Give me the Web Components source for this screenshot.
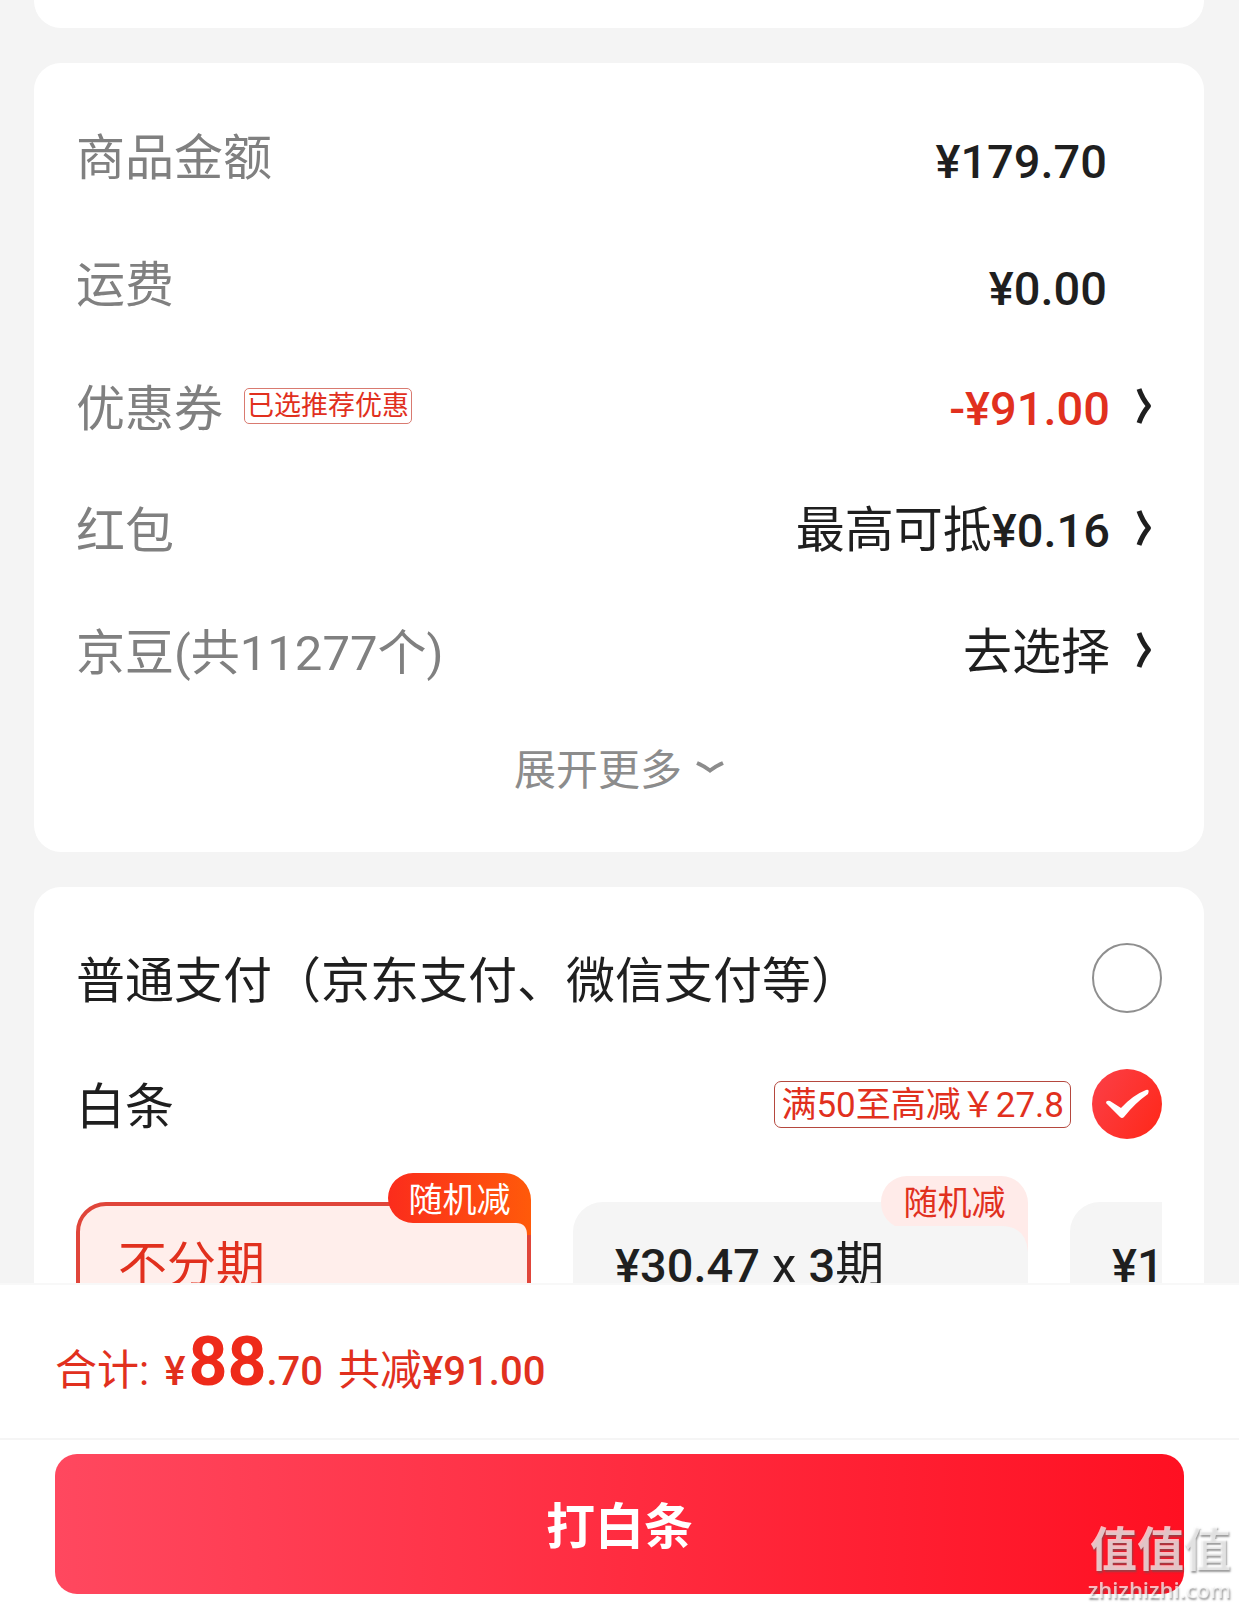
<!DOCTYPE html>
<html lang="zh-CN">
<head>
<meta charset="UTF-8">
<meta name="viewport" content="width=device-width, initial-scale=1">
<title>打白条</title>
<style>
  body {
    margin: 0;
    font-family: Roboto, "Noto Sans CJK SC", sans-serif;
    font-size: 49px;
    line-height: 60px;
    color: #1f1f1f;
    --red: #e1301e;
    --gray: #808080;
    --page: #f4f4f4;
  }
</style>
</head>
<body>
<checkout-page>
  <info-card class="previous"></info-card>

  <info-card class="amounts">
    <amount-row>商品金额<price-text slot="value">¥179.70</price-text></amount-row>
    <amount-row>运费<price-text slot="value">¥0.00</price-text></amount-row>
    <amount-row link>优惠券<promo-tag slot="tag">已选推荐优惠</promo-tag><price-text slot="value" class="minus">-¥91.00</price-text></amount-row>
    <amount-row link>红包<span slot="value">最高可抵<price-text>¥0.16</price-text></span></amount-row>
    <amount-row link>京豆(共11277个)<span slot="value">去选择</span></amount-row>
    <expand-more>展开更多</expand-more>
  </info-card>

  <info-card>
    <pay-methods>
      <span slot="normal">普通支付（京东支付、微信支付等）</span>
      <span slot="credit">白条</span>
      <promo-tag slot="credit-tag" large>满50至高减￥27.8</promo-tag>
      <plan-option slot="plans" selected badge="随机减">不分期</plan-option>
      <plan-option slot="plans" badge="随机减"><price-text>¥30.47</price-text> x <price-text>3</price-text>期</plan-option>
      <plan-option slot="plans"><price-text>¥1</price-text></plan-option>
    </pay-methods>
  </info-card>

  <submit-bar slot="footer" total="88" cents=".70" saved="¥91.00">打白条</submit-bar>
  <site-mark slot="footer"></site-mark>
</checkout-page>

<script>
class CheckoutPage extends HTMLElement {
  constructor() {
    super();
    this.attachShadow({ mode: 'open' });
    this.shadowRoot.innerHTML = `
      <style>
        :host {
          display: flex;
          flex-direction: column;
          height: 100vh;
          background: var(--page);
        }
        main {
          flex: 1;
          min-height: 0;
          display: flex;
          flex-direction: column;
          gap: 35px;
          padding: 0 35px 0 34px;
          overflow-y: auto;
          scrollbar-width: none;
        }
      </style>
      <main><slot></slot></main>
      <slot name="footer"></slot>
    `;
  }
}

class InfoCard extends HTMLElement {
  constructor() {
    super();
    this.attachShadow({ mode: 'open' });
    this.shadowRoot.innerHTML = `
      <style>
        :host {
          display: block;
          flex: none;
          padding: 28px 42px 25px;
          border-radius: 27px;
          background: #fff;
        }
        :host(.previous) {
          padding: 14px 0;
          border-radius: 0 0 27px 27px;
        }
      </style>
      <slot></slot>
    `;
  }
}

class PriceText extends HTMLElement {
  constructor() {
    super();
    this.attachShadow({ mode: 'open' });
    // no blanks around the slot: the price sits inline next to other text
    this.shadowRoot.innerHTML = `<style>
        :host {
          font-size: 47px;
          font-weight: 500;
        }
        :host(.minus) {
          color: var(--red);
        }
      </style><slot></slot>`;
  }
}

class PromoTag extends HTMLElement {
  constructor() {
    super();
    this.attachShadow({ mode: 'open' });
    this.shadowRoot.innerHTML = `
      <style>
        :host {
          display: inline-block;
          flex: none;
          padding: 0 2px;
          border: 1px solid #d97a70;
          border-radius: 5px;
          color: var(--red);
          font-size: 27px;
          line-height: 34px;
          white-space: nowrap;
        }
        :host([large]) {
          padding: 3px 6px 0;
          border-color: #b5483e;
          border-radius: 7px;
          font-size: 35px;
          line-height: 42px;
        }
      </style>
      <slot></slot>
    `;
  }
}

class AmountRow extends HTMLElement {
  constructor() {
    super();
    this.attachShadow({ mode: 'open' });
  }

  connectedCallback() {
    const link = this.hasAttribute('link');
    const value = link
      ? `<button><span class="text"><slot name="value"></slot></span>
          <svg width="16" height="38" viewBox="0 0 16 38" fill="none" stroke="#1f1f1f" stroke-width="5">
            <path d="M3 2 Q6 11 12.500 19 Q6 27 3 36" stroke-linejoin="round"/>
          </svg></button>`
      : '<span class="value"><slot name="value"></slot></span>';

    this.shadowRoot.innerHTML = `
      <style>
        :host {
          display: flex;
          align-items: center;
          height: 127px;
          white-space: nowrap;
        }
        :host([link]) {
          height: 122px;
        }
        .label {
          padding-top: 8px;
          color: var(--gray);
        }
        .tag {
          margin-left: 21px;
          display: flex;
          flex: 1;
        }
        .value {
          padding: 14px 55px 0 0;
        }
        .text {
          padding-top: 5px;
        }
        button {
          display: flex;
          align-items: center;
          gap: 26px;
          padding: 0 10px 0 0;
          border: 0;
          background: none;
          color: inherit;
          font: inherit;
          cursor: pointer;
        }
      </style>
      <span class="label"><slot></slot></span>
      <span class="tag"><slot name="tag"></slot></span>
      ${value}
    `;
  }
}

class ExpandMore extends HTMLElement {
  constructor() {
    super();
    this.attachShadow({ mode: 'open' });
    this.shadowRoot.innerHTML = `
      <style>
        :host {
          display: flex;
          justify-content: center;
          height: 116px;
        }
        button {
          display: flex;
          align-items: center;
          gap: 14px;
          padding: 0;
          border: 0;
          background: none;
          color: #8c8c8c;
          font: inherit;
          font-size: 42px;
          cursor: pointer;
        }
        span {
          padding-top: 4px;
        }
      </style>
      <button><span><slot></slot></span>
        <svg width="28" height="18" viewBox="0 0 28 18" fill="none" stroke="#8c8c8c" stroke-width="4">
          <path d="M1 3 Q8 6 14 10.500 Q20 6 27 3"/>
        </svg>
      </button>
    `;
  }
}

class PayMethods extends HTMLElement {
  constructor() {
    super();
    this.attachShadow({ mode: 'open' });
    this.shadowRoot.innerHTML = `
      <style>
        :host {
          display: block;
        }
        .method {
          display: flex;
          align-items: center;
          gap: 21px;
          height: 126px;
          white-space: nowrap;
          cursor: pointer;
        }
        .name {
          flex: 1;
          padding-top: 8px;
        }
        .radio {
          display: grid;
        }
        input {
          grid-area: 1 / 1;
          appearance: none;
          width: 70px;
          height: 70px;
          margin: 0;
          border: 2px solid #8f8f8f;
          border-radius: 50%;
        }
        input:checked {
          border: 0;
          background: linear-gradient(120deg, #fb4048, #ff2718);
        }
        svg {
          grid-area: 1 / 1;
          pointer-events: none;
        }
        input:not(:checked) + svg {
          visibility: hidden;
        }
        .plans {
          display: flex;
          gap: 42px;
          padding-top: 35px;
          overflow-x: auto;
          scrollbar-width: none;
        }
      </style>
      <label class="method">
        <span class="name"><slot name="normal"></slot></span>
        ${this.radio('normal')}
      </label>
      <label class="method">
        <span class="name"><slot name="credit"></slot></span>
        <slot name="credit-tag"></slot>
        ${this.radio('credit', 'checked')}
      </label>
      <div class="plans"><slot name="plans"></slot></div>
    `;
  }

  radio(value, checked = '') {
    return `
      <span class="radio">
        <input type="radio" name="pay" value="${value}" ${checked}>
        <svg width="70" height="70" viewBox="0 0 70 70">
          <path d="M14 34 Q14 31 18 32 L29 39 Q41 26 54 21 Q58 20 56 25 Q43 34 32 48 Q30 50 28 48 Z" fill="#fff"/>
        </svg>
      </span>
    `;
  }
}

class PlanOption extends HTMLElement {
  constructor() {
    super();
    this.attachShadow({ mode: 'open' });
  }

  connectedCallback() {
    const badge = this.getAttribute('badge');
    this.shadowRoot.innerHTML = `
      <style>
        :host {
          position: relative;
          display: block;
          flex: none;
          --fill: #f5f5f5;
          --line: #f5f5f5;
        }
        :host([selected]) {
          color: var(--red);
          --fill: #ffeeeb;
          --line: #e0453a;
        }
        button {
          width: 455px;
          padding: 30px 38px 54px;
          display: block;
          border: 4px solid var(--line);
          border-radius: 30px;
          background: var(--fill);
          color: inherit;
          font: inherit;
          text-align: left;
          white-space: nowrap;
          cursor: pointer;
        }
        :host([badge]) button {
          border-top-right-radius: 0;
        }
        .badge {
          position: absolute;
          top: -26px;
          right: 0;
          display: grid;
          color: var(--red);
          font-size: 34px;
          line-height: 50px;
          text-align: center;
          pointer-events: none;
        }
        :host([selected]) .badge {
          top: -29px;
          color: #fff;
        }
        .badge span, svg {
          grid-area: 1 / 1;
        }
        .badge span {
          padding-top: 2px;
        }
      </style>
      <button><slot></slot></button>
      ${badge ? `<div class="badge">${this.shape()}<span>${badge}</span></div>` : ''}
    `;
  }

  // tab shape whose tail runs down into the option's right edge
  shape() {
    if (this.hasAttribute('selected')) {
      return `<svg width="143" height="64" viewBox="0 0 143 64">
        <defs><linearGradient id="g"><stop offset="0" stop-color="#fb2c1c"/><stop offset="1" stop-color="#ff5a0a"/></linearGradient></defs>
        <path fill="url(#g)" d="M25 0H116A27 27 0 0 1 143 27V62H139Q139 50 128 50H25A25 25 0 0 1 25 0Z"/>
      </svg>`;
    }
    return `<svg width="147" height="76" viewBox="0 0 147 76">
      <path fill="#ffebe9" d="M26 0H120A27 27 0 0 1 147 27V76Q145 50 120 50H14Q0 42 0 26A26 26 0 0 1 26 0Z"/>
    </svg>`;
  }
}

class SubmitBar extends HTMLElement {
  constructor() {
    super();
    this.attachShadow({ mode: 'open' });
  }

  connectedCallback() {
    this.shadowRoot.innerHTML = `
      <style>
        :host {
          display: block;
          flex: none;
          border-top: 2px solid #f8f8f8;
          background: #fff;
        }
        .total {
          display: flex;
          align-items: baseline;
          height: 153px;
          padding: 0 55px;
          border-bottom: 2px solid #f5f5f5;
          color: var(--red);
          font-size: 42px;
          line-height: 172px;
          white-space: nowrap;
        }
        .price {
          margin: 0 15px;
          font-size: 40px;
          font-weight: 500;
        }
        .price b {
          margin-left: 3px;
          font-size: 68px;
          font-weight: 700;
          line-height: 80px;
          color: #ee2a1a;
        }
        .saved {
          font-size: 40px;
          font-weight: 500;
        }
        .action {
          padding: 14px 55px 13px;
        }
        button {
          display: block;
          width: 100%;
          height: 140px;
          padding: 8px 0 0;
          border: 0;
          border-radius: 22px;
          background: linear-gradient(90deg, #ff485f, #ff2c40 50%, #ff1022);
          color: #fff;
          font: inherit;
          font-weight: 700;
          cursor: pointer;
        }
      </style>
      <div class="total">
        <span>合计:</span>
        <span class="price">¥<b>${this.getAttribute('total')}</b>${this.getAttribute('cents')}</span>
        <span>共减</span>
        <span class="saved">${this.getAttribute('saved')}</span>
      </div>
      <div class="action"><button><slot></slot></button></div>
    `;
  }
}

class SiteMark extends HTMLElement {
  constructor() {
    super();
    this.attachShadow({ mode: 'open' });
    this.shadowRoot.innerHTML = `
      <style>
        :host {
          position: fixed;
          right: 8px;
          bottom: 4px;
          display: flex;
          flex-direction: column;
          align-items: flex-end;
          color: rgba(255, 255, 255, 0.7);
          text-shadow: 1px 2px 2px rgba(90, 90, 90, 0.6);
          pointer-events: none;
        }
        .name {
          font-size: 47px;
          font-weight: 700;
          line-height: 50px;
        }
        .url {
          font-family: "Open Sans", sans-serif;
          font-size: 22px;
          font-weight: 600;
          line-height: 28px;
        }
      </style>
      <span class="name">值值值</span>
      <span class="url">zhizhizhi.com</span>
    `;
  }
}

customElements.define('checkout-page', CheckoutPage);
customElements.define('info-card', InfoCard);
customElements.define('price-text', PriceText);
customElements.define('promo-tag', PromoTag);
customElements.define('amount-row', AmountRow);
customElements.define('expand-more', ExpandMore);
customElements.define('pay-methods', PayMethods);
customElements.define('plan-option', PlanOption);
customElements.define('submit-bar', SubmitBar);
customElements.define('site-mark', SiteMark);
</script>
</body>
</html>
